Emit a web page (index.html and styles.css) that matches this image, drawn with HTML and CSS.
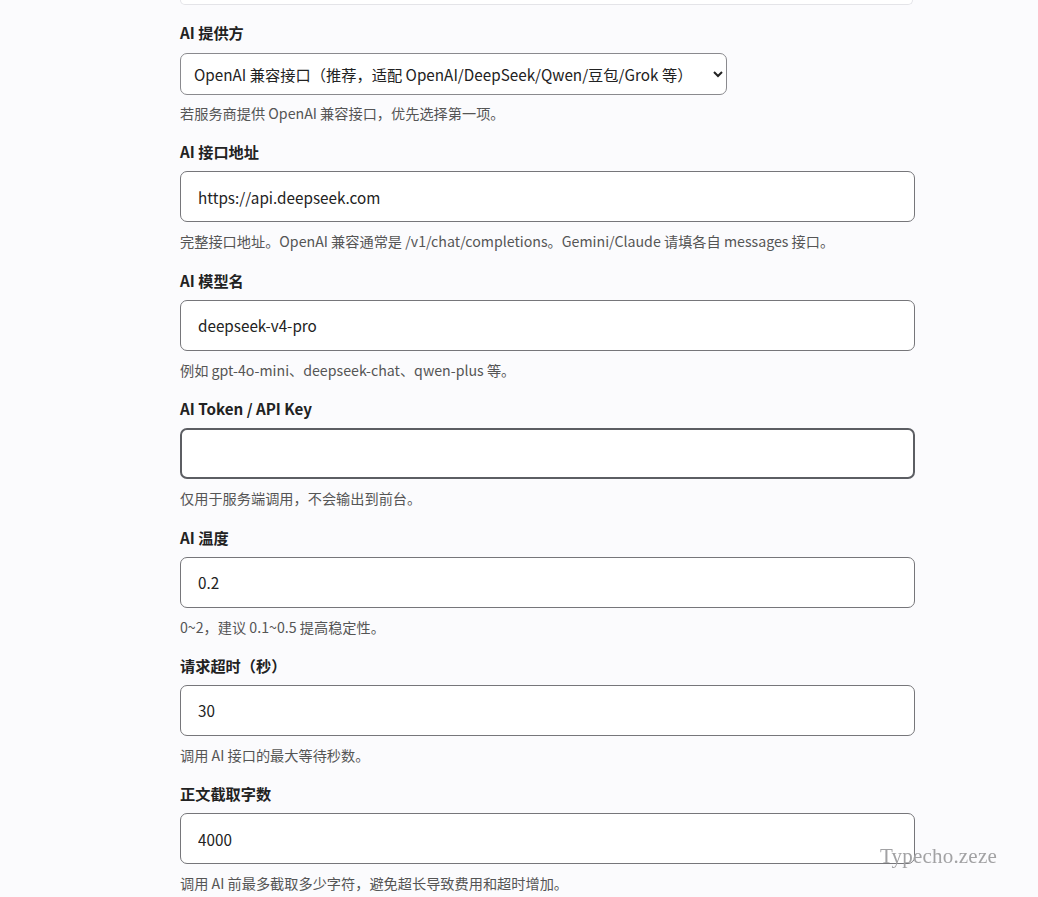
FILE: index.html
```html
<!DOCTYPE html>
<html lang="zh-CN">
<head>
  <meta charset="UTF-8">
  <meta name="viewport" content="width=device-width, initial-scale=1.0">
  <title>AI 设置</title>
  <link rel="stylesheet" href="styles.css">
</head>
<body>

  <form class="settings">
    <div class="prev-box"></div>

    <div class="field field-select">
      <label for="provider">AI 提供方</label>
      <select id="provider">
        <option>OpenAI 兼容接口（推荐，适配 OpenAI/DeepSeek/Qwen/豆包/Grok 等）</option>
        <option>Gemini</option>
        <option>Claude</option>
      </select>
      <p class="hint">若服务商提供 OpenAI 兼容接口，优先选择第一项。</p>
    </div>

    <div class="field">
      <label for="apiUrl">AI 接口地址</label>
      <input type="text" id="apiUrl" value="https://api.deepseek.com">
      <p class="hint">完整接口地址。OpenAI 兼容通常是 /v1/chat/completions。Gemini/Claude 请填各自 messages 接口。</p>
    </div>

    <div class="field">
      <label for="model">AI 模型名</label>
      <input type="text" id="model" value="deepseek-v4-pro">
      <p class="hint">例如 gpt-4o-mini、deepseek-chat、qwen-plus 等。</p>
    </div>

    <div class="field">
      <label for="token">AI Token / API Key</label>
      <input type="password" id="token" class="active">
      <p class="hint">仅用于服务端调用，不会输出到前台。</p>
    </div>

    <div class="field">
      <label for="temperature">AI 温度</label>
      <input type="text" id="temperature" value="0.2">
      <p class="hint">0~2，建议 0.1~0.5 提高稳定性。</p>
    </div>

    <div class="field">
      <label for="timeout">请求超时（秒）</label>
      <input type="text" id="timeout" value="30">
      <p class="hint">调用 AI 接口的最大等待秒数。</p>
    </div>

    <div class="field">
      <label for="maxChars">正文截取字数</label>
      <input type="text" id="maxChars" value="4000">
      <p class="hint">调用 AI 前最多截取多少字符，避免超长导致费用和超时增加。</p>
    </div>
  </form>

  <div class="watermark">Typecho.zeze</div>

</body>
</html>
```

FILE: styles.css
```css
body {
  font-family: 'Noto Sans CJK SC', 'Noto Sans', sans-serif;
  background-color: #fbfbfd;
  color: #222;
  margin: 0;
}

.settings {
  width: 735px;
  padding-left: 180px;
  margin: 0;
}

/* bottom edge of the block above, scrolled mostly out of view */
.prev-box {
  width: 731px;
  height: 4px;
  border: 1px solid #e4e4e8;
  border-top: none;
  border-radius: 0 0 10px 10px;
  background-color: #fff;
  margin-bottom: 18px;
}

.field {
  margin-bottom: 19.4px;
}

label {
  display: block;
  font-size: 15.2px;
  font-weight: bold;
  line-height: 18px;
  color: #222;
  margin-bottom: 11px;
}

.field-select label {
  margin-bottom: 12px;
}

input,
select {
  font-family: inherit;
  font-size: 15.25px;
  color: #222;
  background-color: #fff;
  box-sizing: border-box;
  outline: none;
}

input {
  display: block;
  width: 735px;
  height: 51px;
  padding: 0 17px;
  border: 1px solid #76767a;
  border-radius: 7px;
}

input.active {
  border: 2px solid #5c5e63;
  padding: 0 16px;
}

select {
  display: block;
  width: 547px;
  height: 42px;
  padding: 0 9px;
  border: 1px solid #8a8a8e;
  border-radius: 7px;
}

.hint {
  font-size: 14.2px;
  line-height: 20px;
  color: #555;
  margin: 9px 0 0;
}

.field-select .hint {
  margin-top: 8px;
}

.watermark {
  position: fixed;
  left: 880px;
  top: 844px;
  font-family: 'Liberation Serif', serif;
  font-size: 21px;
  color: #a2a2a4;
  letter-spacing: 0.2px;
  pointer-events: none;
}
```
